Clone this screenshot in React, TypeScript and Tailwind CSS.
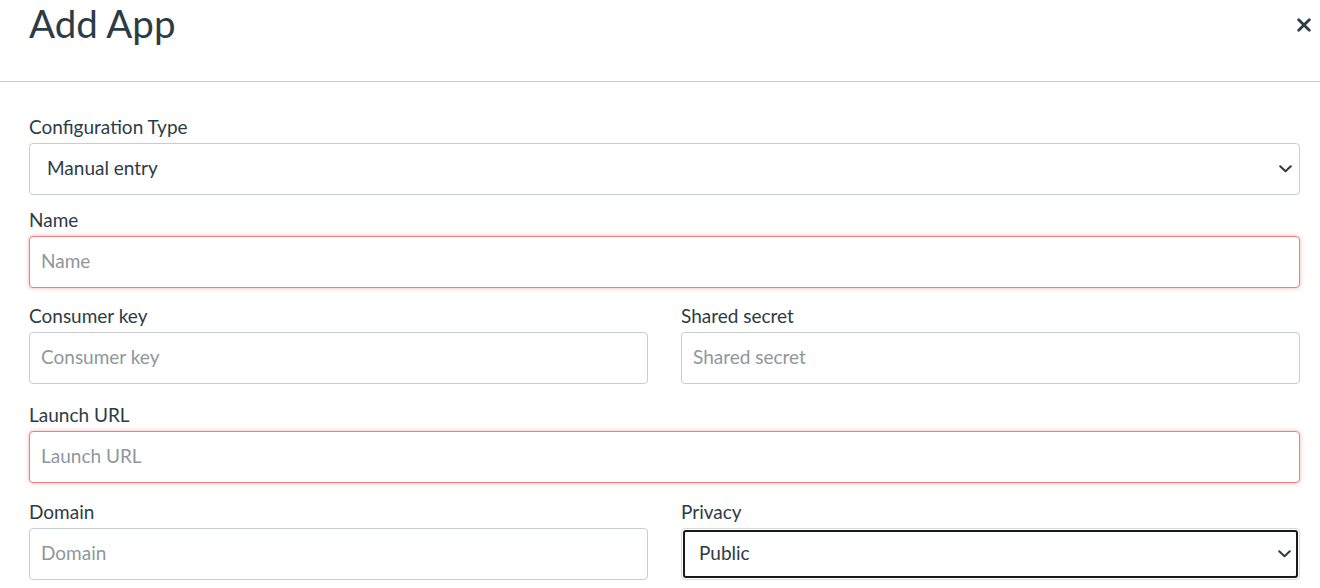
import React from "react";

const font = { fontFamily: "Lato, 'Open Sans', sans-serif" };

function Label({ children }: { children: React.ReactNode }) {
  return (
    <div className="text-[19px] leading-[24px] text-[#2d3b45] mb-[4px]">{children}</div>
  );
}

function TextInput({ placeholder, error }: { placeholder: string; error?: boolean }) {
  return (
    <input
      placeholder={placeholder}
      className={
        "block w-full h-[52px] rounded-[4px] border bg-white px-[11px] pb-[3px] text-[19px] text-[#2d3b45] outline-none placeholder:text-[#8f979d] " +
        (error
          ? "border-[#ef7f7f] shadow-[0_0_4px_rgba(230,40,40,0.35)]"
          : "border-[#c7cdd1]")
      }
      style={font}
    />
  );
}

function Chevron() {
  return (
    <svg width="13" height="8" viewBox="0 0 13 8" fill="none">
      <path d="M1.2 1.2 L6.5 6.3 L11.8 1.2" stroke="#2d3b45" strokeWidth="2" strokeLinecap="round" strokeLinejoin="round" />
    </svg>
  );
}

function Field({ label, className, children }: { label: string; className: string; children: React.ReactNode }) {
  return (
    <div className={className}>
      <Label>{label}</Label>
      {children}
    </div>
  );
}

export default function App() {
  return (
    <div className="w-[1320px] h-[588px] bg-white overflow-hidden" style={font}>
      <div className="flex justify-between h-[82px] border-b border-[#c7cdd1]">
        <h1 className="pl-[29px] text-[38.5px] leading-[1.2] text-[#2d3b45] font-normal">Add App</h1>
        <button className="mt-[18px] mr-[9px] h-[14px] w-[14px]" aria-label="Close">
          <svg width="14" height="14" viewBox="0 0 14 14">
            <path d="M1.7 1.7 L12.3 12.3 M12.3 1.7 L1.7 12.3" stroke="#2d3b45" strokeWidth="2.8" strokeLinecap="round" />
          </svg>
        </button>
      </div>
      <div className="pl-[29px] pr-[20px] pt-[33px]">
        <Field label="Configuration Type" className="mb-[13px]">
          <div className="flex items-center justify-between h-[52px] rounded-[4px] border border-[#c7cdd1] pl-[17px] pr-[7px] pb-[1px] text-[19px] text-[#2d3b45]">
            <span>Manual entry</span>
            <Chevron />
          </div>
        </Field>
        <Field label="Name" className="mb-[16px]">
          <TextInput placeholder="Name" error />
        </Field>
        <div className="grid grid-cols-2 gap-x-[33px] mb-[19px]">
          <Field label="Consumer key" className="">
            <TextInput placeholder="Consumer key" />
          </Field>
          <Field label="Shared secret" className="">
            <TextInput placeholder="Shared secret" />
          </Field>
        </div>
        <Field label="Launch URL" className="mb-[17px]">
          <TextInput placeholder="Launch URL" error />
        </Field>
        <div className="grid grid-cols-2 gap-x-[33px]">
          <Field label="Domain" className="">
            <TextInput placeholder="Domain" />
          </Field>
          <Field label="Privacy" className="">
            <div className="h-[52px] rounded-[4px] border border-[#d5dadd] p-[1px]">
              <div className="flex items-center justify-between h-full rounded-[3px] border-2 border-[#1a1a1a] pl-[14px] pr-[5px] pb-[1px] text-[19px] text-[#2d3b45]">
                <span>Public</span>
                <Chevron />
              </div>
            </div>
          </Field>
        </div>
      </div>
    </div>
  );
}
